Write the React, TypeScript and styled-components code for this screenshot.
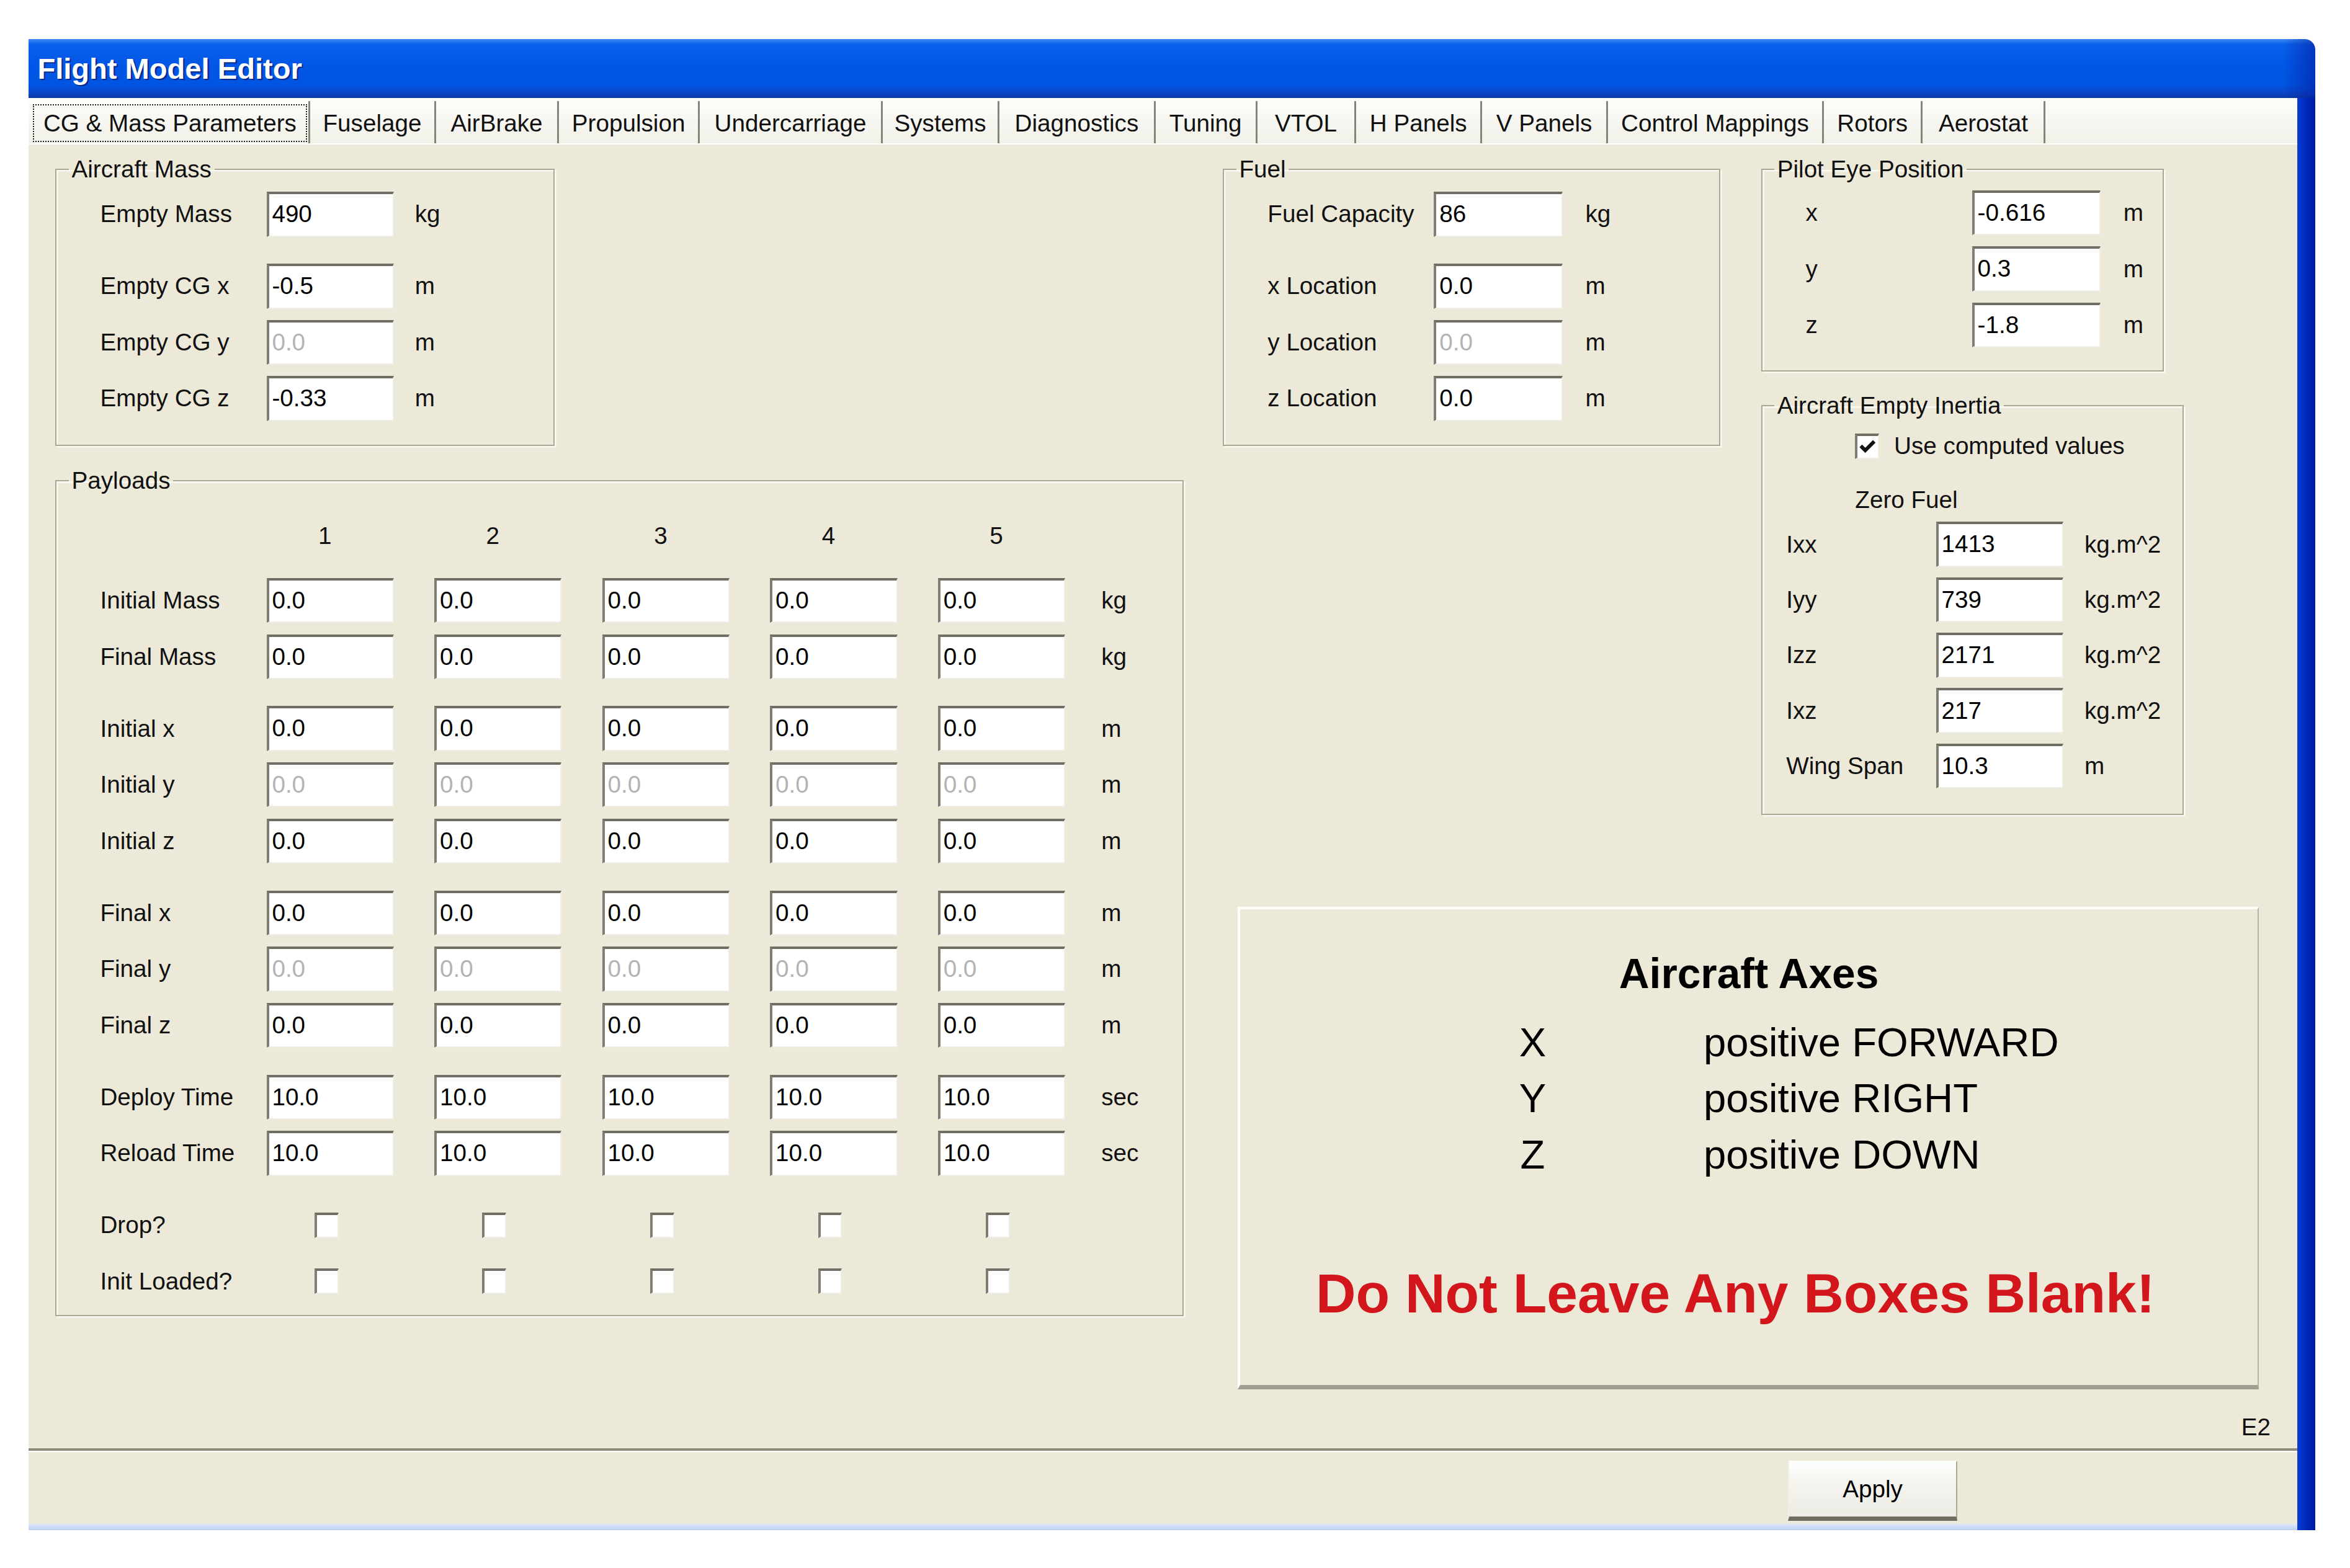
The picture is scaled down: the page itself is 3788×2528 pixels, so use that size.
import styled, { createGlobalStyle, css } from "styled-components";

// the reference is a 1568px wide screenshot blown up to 3788px
const SCALE = 3788 / 1568;
const FONT = `"Liberation Sans", Arial, sans-serif`;

const GlobalStyle = createGlobalStyle`
  html, body {
    margin: 0;
    padding: 0;
    background: #fff;
  }
  body {
    font-family: ${FONT};
    color: #111;
  }
  * {
    box-sizing: border-box;
  }
`;

const Stage = styled.div`
  zoom: ${SCALE};
  width: 1568px;
  height: 1046px;
  padding: 26px 0 0 19px;
  background: #fff;
  overflow: hidden;
`;

const Window = styled.div`
  width: 1526px;
  height: 995px;
  display: flex;
  flex-direction: column;
`;

const TitleBar = styled.div`
  flex: none;
  height: 39.5px;
  display: flex;
  align-items: center;
  padding-left: 6px;
  border-radius: 0 7px 0 0;
  background: linear-gradient(90deg, transparent 98.6%, rgba(0, 24, 150, 0.55)),
    linear-gradient(180deg, #3d8bf7 0%, #0b60ec 9%, #0257e6 40%, #0054e2 78%, #0a46c8 92%, #0a3aa8 100%);
  color: #fff;
  font-size: 19.5px;
  font-weight: bold;
  text-shadow: 1px 1px 0 #0c2a8c;
`;

const Frame = styled.div`
  flex: 1;
  min-height: 0;
  display: flex;
`;

const Client = styled.div`
  flex: 1;
  display: flex;
  flex-direction: column;
  background: #ece9d8;
`;

const SideBorder = styled.div`
  width: 12px;
  flex: none;
  background: linear-gradient(90deg, #0a3ed6, #0029bd 45%, #001a9e);
`;

const TabStrip = styled.div`
  flex: none;
  height: 31px;
  display: flex;
  padding: 2px 0 0 3px;
  background: linear-gradient(180deg, #fdfdfb, #f1f0e8);
  border-bottom: 1px solid #fff;
`;

const Tab = styled.div<{ $w: number; $active?: boolean }>`
  width: ${(p) => p.$w}px;
  flex: none;
  display: flex;
  align-items: center;
  justify-content: center;
  padding-top: 2px;
  border-right: 1.5px solid #85847a;
  font-size: 16px;
  white-space: nowrap;
  ${(p) =>
    p.$active &&
    css`
      justify-content: stretch;
      padding: 2px 1px 1px 0;
    `}
`;

const FocusText = styled.span`
  flex: 1;
  height: 100%;
  display: flex;
  align-items: center;
  justify-content: center;
  padding-top: 1px;
  border: 1px dotted #222;
`;

const TabPanel = styled.div`
  flex: 1;
  display: flex;
  flex-direction: column;
  padding: 7.5px 18px 0 18px;
  border-bottom: 2px solid #8d8b7e;
  box-shadow: 0 1px 0 #fbfaf5;
`;

const ContentRow = styled.div`
  display: flex;
  gap: 26px;
  align-items: flex-start;
`;

const LeftColumn = styled.div`
  width: 753px;
  flex: none;
  display: flex;
  flex-direction: column;
  gap: 14px;
`;

const RightArea = styled.div`
  display: flex;
  flex-direction: column;
`;

const TopRow = styled.div`
  display: flex;
  gap: 27px;
  align-items: flex-start;
`;

const Stack = styled.div`
  display: flex;
  flex-direction: column;
  gap: 14px;
`;

const Group = styled.fieldset<{ $w: number }>`
  width: ${(p) => p.$w}px;
  min-width: 0;
  margin: 0;
  padding: 0;
  border: 1px solid #aaa895;
  box-shadow: inset 1px 1px 0 #faf9f2, 1px 1px 0 #faf9f2;
`;

const Legend = styled.legend`
  margin-left: 8px;
  padding: 0 2px;
  font-size: 16px;
  line-height: 18px;
`;

const GroupBody = styled.div<{ $pad: string }>`
  padding: ${(p) => p.$pad};
`;

const FieldRow = styled.div<{ $h: number; $gap?: number }>`
  height: ${(p) => p.$h}px;
  margin-top: ${(p) => p.$gap ?? 0}px;
  display: flex;
  align-items: center;
`;

const Label = styled.span<{ $w: number }>`
  width: ${(p) => p.$w}px;
  flex: none;
  font-size: 16px;
  white-space: nowrap;
`;

const Field = styled.input<{ $w: number }>`
  width: ${(p) => p.$w}px;
  height: 30px;
  flex: none;
  margin: 0;
  padding: 0 0 1px 2px;
  font-family: ${FONT};
  font-size: 16px;
  color: #000;
  background: #fff;
  border-style: solid;
  border-width: 2px 1px 1px 2px;
  border-color: #706e63 #eeede6 #eeede6 #807e72;
  border-radius: 0;
  outline: none;

  &:disabled {
    color: #b3b3b3;
    background: #fff;
  }
`;

const Unit = styled.span<{ $gap: number }>`
  margin-left: ${(p) => p.$gap}px;
  font-size: 16px;
  white-space: nowrap;
`;

const Cells = styled.div`
  display: flex;
  gap: 27px;
`;

const HeadCell = styled.div`
  width: 85px;
  padding-right: 7px;
  text-align: center;
  font-size: 16px;
`;

const CheckCell = styled.div`
  width: 85px;
  padding-right: 5px;
  display: flex;
  justify-content: center;
`;

const Box = styled.span`
  width: 16px;
  height: 17px;
  flex: none;
  display: inline-flex;
  align-items: center;
  justify-content: center;
  background: #fff;
  border-style: solid;
  border-width: 2px 1px 1px 2px;
  border-color: #706e63 #eeede6 #eeede6 #807e72;
`;

const OptionRow = styled.div<{ $h: number; $gap?: number }>`
  height: ${(p) => p.$h}px;
  margin-top: ${(p) => p.$gap ?? 0}px;
  padding-left: 46px;
  display: flex;
  align-items: center;
  gap: 10px;
  font-size: 16px;
`;

const AxesPanel = styled.div`
  width: 681px;
  height: 322px;
  margin: 61px 0 0 10px;
  padding-top: 26px;
  border-style: solid;
  border-width: 2px 1px 3px 2px;
  border-color: #fefefa #b6b3a2 #a29f90 #fefefa;
`;

const AxesTitle = styled.div`
  text-align: center;
  font-size: 28px;
  font-weight: bold;
  line-height: 34px;
  color: #000;
`;

const AxesList = styled.div`
  margin-top: 10px;
  display: grid;
  grid-template-columns: 180px 30px 99px auto;
  grid-auto-rows: 37.5px;
  align-items: center;
  font-size: 27px;
  color: #000;
`;

const AxisLetter = styled.span`
  grid-column: 2;
  text-align: center;
`;

const AxisText = styled.span`
  grid-column: 4;
`;

const Warning = styled.div`
  margin-top: 52px;
  padding-right: 18px;
  text-align: center;
  font-size: 37px;
  line-height: 44px;
  font-weight: bold;
  color: #d2161c;
`;

const PageCode = styled.div`
  margin-top: auto;
  margin-bottom: 5px;
  text-align: right;
  font-size: 16px;
  line-height: 18px;
`;

const Footer = styled.div`
  flex: none;
  height: 49px;
  display: flex;
  justify-content: flex-end;
  align-items: flex-start;
  padding: 7px 227px 0 0;
`;

const Button = styled.button`
  width: 113px;
  height: 40px;
  margin: 0;
  font-family: ${FONT};
  font-size: 16px;
  color: #000;
  background: linear-gradient(180deg, #ffffff 0%, #f6f5f0 30%, #ecebe4 100%);
  border-style: solid;
  border-width: 1px 1px 3px 1px;
  border-color: #fdfdfb #a9a798 #6f6d60 #f0efe8;
  border-radius: 0;
`;

const BottomStrip = styled.div`
  flex: none;
  height: 4px;
  background: linear-gradient(180deg, #dde7fb, #bcd0f6);
`;

type Row = {
  label: string;
  value: string;
  unit: string;
  gap?: number;
  disabled?: boolean;
};

const tabs: [string, number][] = [
  ["CG & Mass Parameters", 185],
  ["Fuselage", 84],
  ["AirBrake", 82],
  ["Propulsion", 94],
  ["Undercarriage", 122],
  ["Systems", 78],
  ["Diagnostics", 104],
  ["Tuning", 68],
  ["VTOL", 66],
  ["H Panels", 84],
  ["V Panels", 84],
  ["Control Mappings", 144],
  ["Rotors", 66],
  ["Aerostat", 82],
];

const massRows: Row[] = [
  { label: "Empty Mass", value: "490", unit: "kg" },
  { label: "Empty CG x", value: "-0.5", unit: "m", gap: 10.5 },
  { label: "Empty CG y", value: "0.0", unit: "m", disabled: true },
  { label: "Empty CG z", value: "-0.33", unit: "m" },
];

const fuelRows: Row[] = [
  { label: "Fuel Capacity", value: "86", unit: "kg" },
  { label: "x Location", value: "0.0", unit: "m", gap: 10.5 },
  { label: "y Location", value: "0.0", unit: "m", disabled: true },
  { label: "z Location", value: "0.0", unit: "m" },
];

const eyeRows: Row[] = [
  { label: "x", value: "-0.616", unit: "m" },
  { label: "y", value: "0.3", unit: "m" },
  { label: "z", value: "-1.8", unit: "m" },
];

const inertiaRows: Row[] = [
  { label: "Ixx", value: "1413", unit: "kg.m^2" },
  { label: "Iyy", value: "739", unit: "kg.m^2" },
  { label: "Izz", value: "2171", unit: "kg.m^2" },
  { label: "Ixz", value: "217", unit: "kg.m^2" },
  { label: "Wing Span", value: "10.3", unit: "m" },
];

const payloadRows: Row[] = [
  { label: "Initial Mass", value: "0.0", unit: "kg", gap: 5.5 },
  { label: "Final Mass", value: "0.0", unit: "kg" },
  { label: "Initial x", value: "0.0", unit: "m", gap: 10.5 },
  { label: "Initial y", value: "0.0", unit: "m", disabled: true },
  { label: "Initial z", value: "0.0", unit: "m" },
  { label: "Final x", value: "0.0", unit: "m", gap: 10.5 },
  { label: "Final y", value: "0.0", unit: "m", disabled: true },
  { label: "Final z", value: "0.0", unit: "m" },
  { label: "Deploy Time", value: "10.0", unit: "sec", gap: 10.5 },
  { label: "Reload Time", value: "10.0", unit: "sec" },
];

const payloadChecks = [
  { label: "Drop?", gap: 10.5 },
  { label: "Init Loaded?", gap: 0 },
];

const axes = [
  ["X", "positive FORWARD"],
  ["Y", "positive RIGHT"],
  ["Z", "positive DOWN"],
];

const slots = [1, 2, 3, 4, 5];

const Check = ({ checked }: { checked?: boolean }) => (
  <Box role="checkbox" aria-checked={!!checked}>
    {checked && (
      <svg width="11" height="10" viewBox="0 0 11 10">
        <path d="M1 4.5 L4 7.5 L10 1.5" fill="none" stroke="#111" strokeWidth="2.4" />
      </svg>
    )}
  </Box>
);

const FieldList = ({
  rows,
  labelWidth,
  inputWidth,
  unitGap,
  pitch,
}: {
  rows: Row[];
  labelWidth: number;
  inputWidth: number;
  unitGap: number;
  pitch: number;
}) => (
  <>
    {rows.map((r) => (
      <FieldRow key={r.label} $h={pitch} $gap={r.gap}>
        <Label $w={labelWidth}>{r.label}</Label>
        <Field $w={inputWidth} defaultValue={r.value} disabled={r.disabled} />
        <Unit $gap={unitGap}>{r.unit}</Unit>
      </FieldRow>
    ))}
  </>
);

const Payloads = () => (
  <Group $w={753}>
    <Legend>Payloads</Legend>
    <GroupBody $pad="9.25px 0 3.75px 29px">
      <FieldRow $h={37.5}>
        <Label $w={111} />
        <Cells>
          {slots.map((n) => (
            <HeadCell key={n}>{n}</HeadCell>
          ))}
        </Cells>
      </FieldRow>
      {payloadRows.map((r) => (
        <FieldRow key={r.label} $h={37.5} $gap={r.gap}>
          <Label $w={111}>{r.label}</Label>
          <Cells>
            {slots.map((n) => (
              <Field key={n} $w={85} defaultValue={r.value} disabled={r.disabled} />
            ))}
          </Cells>
          <Unit $gap={24}>{r.unit}</Unit>
        </FieldRow>
      ))}
      {payloadChecks.map((c) => (
        <FieldRow key={c.label} $h={37.5} $gap={c.gap}>
          <Label $w={111}>{c.label}</Label>
          <Cells>
            {slots.map((n) => (
              <CheckCell key={n}>
                <Check />
              </CheckCell>
            ))}
          </Cells>
        </FieldRow>
      ))}
    </GroupBody>
  </Group>
);

export default function App() {
  return (
    <>
      <GlobalStyle />
      <Stage>
        <Window>
          <TitleBar>Flight Model Editor</TitleBar>
          <Frame>
            <Client>
              <TabStrip>
                {tabs.map(([t, w], i) =>
                  i === 0 ? (
                    <Tab key={t} $w={w} $active>
                      <FocusText>{t}</FocusText>
                    </Tab>
                  ) : (
                    <Tab key={t} $w={w}>
                      {t}
                    </Tab>
                  )
                )}
              </TabStrip>

              <TabPanel>
                <ContentRow>
                  <LeftColumn>
                    <Group $w={333}>
                      <Legend>Aircraft Mass</Legend>
                      <GroupBody $pad="2.25px 0 12.25px 29px">
                        <FieldList rows={massRows} labelWidth={111} inputWidth={85} unitGap={14} pitch={37.5} />
                      </GroupBody>
                    </Group>
                    <Payloads />
                  </LeftColumn>

                  <RightArea>
                    <TopRow>
                      <Group $w={332}>
                        <Legend>Fuel</Legend>
                        <GroupBody $pad="2.25px 0 12.25px 29px">
                          <FieldList rows={fuelRows} labelWidth={111} inputWidth={86} unitGap={15} pitch={37.5} />
                        </GroupBody>
                      </Group>
                      <Stack>
                        <Group $w={269}>
                          <Legend>Pilot Eye Position</Legend>
                          <GroupBody $pad="1.25px 0 11.25px 29px">
                            <FieldList rows={eyeRows} labelWidth={111} inputWidth={86} unitGap={15} pitch={37.5} />
                          </GroupBody>
                        </Group>
                        <Group $w={282}>
                          <Legend>Aircraft Empty Inertia</Legend>
                          <GroupBody $pad="3px 0 13.5px 16px">
                            <OptionRow $h={30}>
                              <Check checked />
                              <span>Use computed values</span>
                            </OptionRow>
                            <OptionRow $h={22} $gap={10}>
                              Zero Fuel
                            </OptionRow>
                            <FieldList rows={inertiaRows} labelWidth={100} inputWidth={85} unitGap={14} pitch={37} />
                          </GroupBody>
                        </Group>
                      </Stack>
                    </TopRow>

                    <AxesPanel>
                      <AxesTitle>Aircraft Axes</AxesTitle>
                      <AxesList>
                        {axes.map(([letter, text]) => [
                          <AxisLetter key={letter}>{letter}</AxisLetter>,
                          <AxisText key={text}>{text}</AxisText>,
                        ])}
                      </AxesList>
                      <Warning>Do Not Leave Any Boxes Blank!</Warning>
                    </AxesPanel>
                  </RightArea>
                </ContentRow>
                <PageCode>E2</PageCode>
              </TabPanel>

              <Footer>
                <Button type="button">Apply</Button>
              </Footer>
              <BottomStrip />
            </Client>
            <SideBorder />
          </Frame>
        </Window>
      </Stage>
    </>
  );
}
